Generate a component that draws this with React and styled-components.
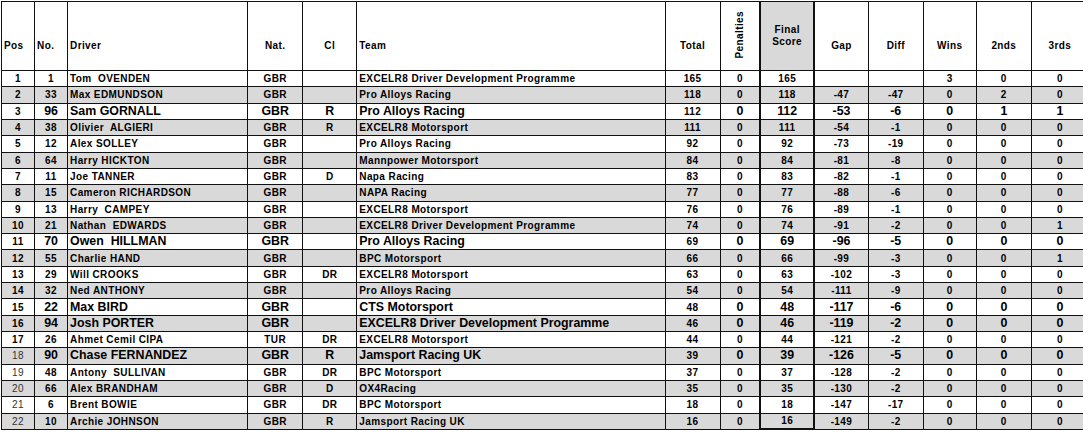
import React from "react";
import styled, { createGlobalStyle, css } from "styled-components";

const Global = createGlobalStyle`
  html, body { margin: 0; padding: 0; background: #fff; overflow: hidden; }
  body { font-family: "Liberation Sans", Arial, sans-serif; color: #000; }
`;

const Sheet = styled.div`
  padding: 1px 0 0 1px;
  width: 1083px;
  height: 441px;
  box-sizing: border-box;
  overflow: hidden;
`;

const Table = styled.table`
  table-layout: fixed;
  border-collapse: collapse;
  width: 1088px;
  font-weight: 700;
`;

const COLS = [33, 33, 180, 55, 54, 308, 55, 40, 54, 54, 55, 53, 55, 57];

const smallText = css`
  font-size: 10px;
  letter-spacing: 0.4px;
`;
const bigText = css`
  font-size: 12.4px;
  letter-spacing: 0;
`;

const HeadCell = styled.th`
  height: 69px;
  box-sizing: border-box;
  border: 1px solid #111;
  padding: 0 0 18px ${(p) => (p.$align === "left" ? "2px" : "0")};
  text-align: ${(p) => p.$align || "center"};
  vertical-align: bottom;
  font-weight: 700;
  line-height: 12px;
  white-space: nowrap;
  ${smallText};
  ${(p) =>
    p.$thick &&
    css`
      border-left: 2px solid #111;
      border-right: 2px solid #111;
      background: #d9d9d9;
    `}
  ${(p) =>
    p.$middle &&
    css`
      vertical-align: middle;
      padding-bottom: 0;
    `}
`;

const Vertical = styled.span`
  display: inline-block;
  writing-mode: vertical-rl;
  transform: rotate(180deg);
  line-height: 12px;
`;

const Stack = styled.span`
  display: block;
  line-height: 13px;
  margin-top: -1px;
`;

const Row = styled.tr`
  height: 16.32px;
  background: ${(p) => (p.$shade ? "#d9d9d9" : "#fff")};
`;

const Cell = styled.td`
  border: 1px solid #111;
  padding: 0 0 0 ${(p) => (p.$align === "left" ? "2px" : "0")};
  text-align: ${(p) => p.$align || "center"};
  vertical-align: middle;
  white-space: pre;
  overflow: hidden;
  line-height: 13px;
  height: 16.32px;
  box-sizing: border-box;
  ${(p) => (p.$big ? bigText : smallText)};
  ${(p) =>
    p.$thick &&
    css`
      border-left: 2px solid #111;
      border-right: 2px solid #111;
    `}
  ${(p) =>
    p.$thick &&
    p.$last &&
    css`
      border-bottom: 2px solid #111;
    `}
  ${(p) =>
    p.$plain &&
    css`
      font-weight: 400;
      color: #333;
    `}
`;

const rows = [
  [1, 1, "Tom  OVENDEN", "GBR", "", "EXCELR8 Driver Development Programme", 165, 0, 165, "", "", 3, 0, 0],
  [2, 33, "Max EDMUNDSON", "GBR", "", "Pro Alloys Racing", 118, 0, 118, -47, -47, 0, 2, 0],
  [3, 96, "Sam GORNALL", "GBR", "R", "Pro Alloys Racing", 112, 0, 112, -53, -6, 0, 1, 1, true],
  [4, 38, "Olivier  ALGIERI", "GBR", "R", "EXCELR8 Motorsport", 111, 0, 111, -54, -1, 0, 0, 0],
  [5, 12, "Alex SOLLEY", "GBR", "", "Pro Alloys Racing", 92, 0, 92, -73, -19, 0, 0, 0],
  [6, 64, "Harry HICKTON", "GBR", "", "Mannpower Motorsport", 84, 0, 84, -81, -8, 0, 0, 0],
  [7, 11, "Joe TANNER", "GBR", "D", "Napa Racing", 83, 0, 83, -82, -1, 0, 0, 0],
  [8, 15, "Cameron RICHARDSON", "GBR", "", "NAPA Racing", 77, 0, 77, -88, -6, 0, 0, 0],
  [9, 13, "Harry  CAMPEY", "GBR", "", "EXCELR8 Motorsport", 76, 0, 76, -89, -1, 0, 0, 0],
  [10, 21, "Nathan  EDWARDS", "GBR", "", "EXCELR8 Driver Development Programme", 74, 0, 74, -91, -2, 0, 0, 1],
  [11, 70, "Owen  HILLMAN", "GBR", "", "Pro Alloys Racing", 69, 0, 69, -96, -5, 0, 0, 0, true],
  [12, 55, "Charlie HAND", "GBR", "", "BPC Motorsport", 66, 0, 66, -99, -3, 0, 0, 1],
  [13, 29, "Will CROOKS", "GBR", "DR", "EXCELR8 Motorsport", 63, 0, 63, -102, -3, 0, 0, 0],
  [14, 32, "Ned ANTHONY", "GBR", "", "Pro Alloys Racing", 54, 0, 54, -111, -9, 0, 0, 0],
  [15, 22, "Max BIRD", "GBR", "", "CTS Motorsport", 48, 0, 48, -117, -6, 0, 0, 0, true],
  [16, 94, "Josh PORTER", "GBR", "", "EXCELR8 Driver Development Programme", 46, 0, 46, -119, -2, 0, 0, 0, true],
  [17, 26, "Ahmet Cemil CIPA", "TUR", "DR", "EXCELR8 Motorsport", 44, 0, 44, -121, -2, 0, 0, 0],
  [18, 90, "Chase FERNANDEZ", "GBR", "R", "Jamsport Racing UK", 39, 0, 39, -126, -5, 0, 0, 0, true],
  [19, 48, "Antony  SULLIVAN", "GBR", "DR", "BPC Motorsport", 37, 0, 37, -128, -2, 0, 0, 0],
  [20, 66, "Alex BRANDHAM", "GBR", "D", "OX4Racing", 35, 0, 35, -130, -2, 0, 0, 0],
  [21, 6, "Brent BOWIE", "GBR", "DR", "BPC Motorsport", 18, 0, 18, -147, -17, 0, 0, 0],
  [22, 10, "Archie JOHNSON", "GBR", "R", "Jamsport Racing UK", 16, 0, 16, -149, -2, 0, 0, 0],
];

export default function App() {
  return (
    <>
      <Global />
      <Sheet>
        <Table>
          <colgroup>
            {COLS.map((w, i) => (
              <col key={i} style={{ width: w }} />
            ))}
          </colgroup>
          <thead>
            <tr>
              <HeadCell $align="left">Pos</HeadCell>
              <HeadCell $align="left">No.</HeadCell>
              <HeadCell $align="left">Driver</HeadCell>
              <HeadCell>Nat.</HeadCell>
              <HeadCell>Cl</HeadCell>
              <HeadCell $align="left">Team</HeadCell>
              <HeadCell>Total</HeadCell>
              <HeadCell $middle>
                <Vertical>Penalties</Vertical>
              </HeadCell>
              <HeadCell $middle $thick>
                <Stack>Final</Stack>
                <Stack>Score</Stack>
              </HeadCell>
              <HeadCell>Gap</HeadCell>
              <HeadCell>Diff</HeadCell>
              <HeadCell>Wins</HeadCell>
              <HeadCell>2nds</HeadCell>
              <HeadCell>3rds</HeadCell>
            </tr>
          </thead>
          <tbody>
            {rows.map((r, i) => {
              const big = !!r[14];
              const last = i === rows.length - 1;
              return (
                <Row key={r[0]} $shade={i % 2 === 1}>
                  <Cell $plain={r[0] >= 18}>{r[0]}</Cell>
                  <Cell $big={big}>{r[1]}</Cell>
                  <Cell $align="left" $big={big}>{r[2]}</Cell>
                  <Cell $big={big}>{r[3]}</Cell>
                  <Cell $big={big}>{r[4]}</Cell>
                  <Cell $align="left" $big={big}>{r[5]}</Cell>
                  <Cell>{r[6]}</Cell>
                  <Cell $big={big}>{r[7]}</Cell>
                  <Cell $big={big} $thick $last={last}>{r[8]}</Cell>
                  <Cell $big={big}>{r[9]}</Cell>
                  <Cell $big={big}>{r[10]}</Cell>
                  <Cell $big={big}>{r[11]}</Cell>
                  <Cell $big={big}>{r[12]}</Cell>
                  <Cell $big={big}>{r[13]}</Cell>
                </Row>
              );
            })}
          </tbody>
        </Table>
      </Sheet>
    </>
  );
}
